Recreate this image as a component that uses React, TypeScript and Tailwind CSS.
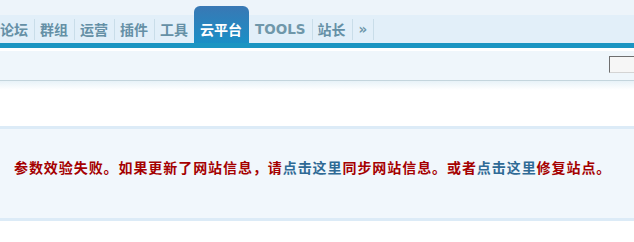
import React from 'react';

type NavItem = {
  label: string;
  active?: boolean;
  latin?: boolean;
};

const items: NavItem[] = [
  { label: '论坛' },
  { label: '群组' },
  { label: '运营' },
  { label: '插件' },
  { label: '工具' },
  { label: '云平台', active: true },
  { label: 'TOOLS', latin: true },
  { label: '站长' },
  { label: '»', latin: true }
];

const Sep: React.FC = () => <div className="mb-[3px] h-[21px] w-px self-end bg-[#c9dde9]" />;

const Nav: React.FC = () => (
  <div className="flex h-[43px] items-end bg-[linear-gradient(#edf4fa_0_15px,#e2eff9_15px)]">
    <div className="ml-[-5px] flex h-full items-end">
      {items.map((item, i) => {
        const next = items[i + 1];
        const showSep = !item.active && next && !next.active;
        if (item.active) {
          return (
            <div
              key={item.label}
              className="flex h-[37px] items-center rounded-t-[6px] bg-[linear-gradient(#3978b4,#1a8fc6)] pl-[6px] pr-[7px] pt-[9px] text-[14px] font-bold text-white"
            >
              {item.label}
            </div>
          );
        }
        return (
          <React.Fragment key={item.label}>
            <div
              className={
                item.latin
                  ? "flex h-[28px] items-center pl-[6px] pr-[6px] font-['DejaVu_Sans'] text-[13.5px] font-bold text-[#6f97aa]"
                  : 'flex h-[28px] items-center pl-[5px] pr-[6px] text-[14px] font-bold text-[#6590a6]'
              }
            >
              {item.label}
            </div>
            {(showSep || !next) && <Sep />}
          </React.Fragment>
        );
      })}
    </div>
  </div>
);

const App: React.FC = () => {
  return (
    <div className="h-[242px] w-[634px] overflow-hidden bg-white font-['Noto_Sans_CJK_SC',sans-serif]">
      <Nav />
      <div className="h-[5px] bg-[#1b95c2]" />
      <div className="h-[3px] bg-white" />
      <div className="flex h-[30px] items-start justify-end overflow-hidden border-b border-[#c4d5dd] bg-[#eff6fb] pt-[5px]">
        <div className="mr-[-5px] h-[17px] w-[30px] shrink-0 border border-b-[#d4d4d4] border-l-[#6f6f6f] border-r-[#d4d4d4] border-t-[#6f6f6f] bg-[#f6f6f6]" />
      </div>
      <div className="h-[9px] bg-[linear-gradient(#e8f2f8,#ffffff)]" />
      <div className="h-[36px]" />
      <div className="h-[95px] border-y-[3px] border-[#dcebf7] bg-[#f1f7fc] pl-[14px] pt-[28px]">
        <p className="text-[14px] font-bold leading-[20px] tracking-[0.93px] text-[#a50000]">
          参数效验失败。如果更新了网站信息，请
          <a className="text-[#2f6a95]">点击这里</a>
          同步网站信息。或者
          <a className="text-[#2f6a95]">点击这里</a>
          修复站点。
        </p>
      </div>
    </div>
  );
};

export default App;
